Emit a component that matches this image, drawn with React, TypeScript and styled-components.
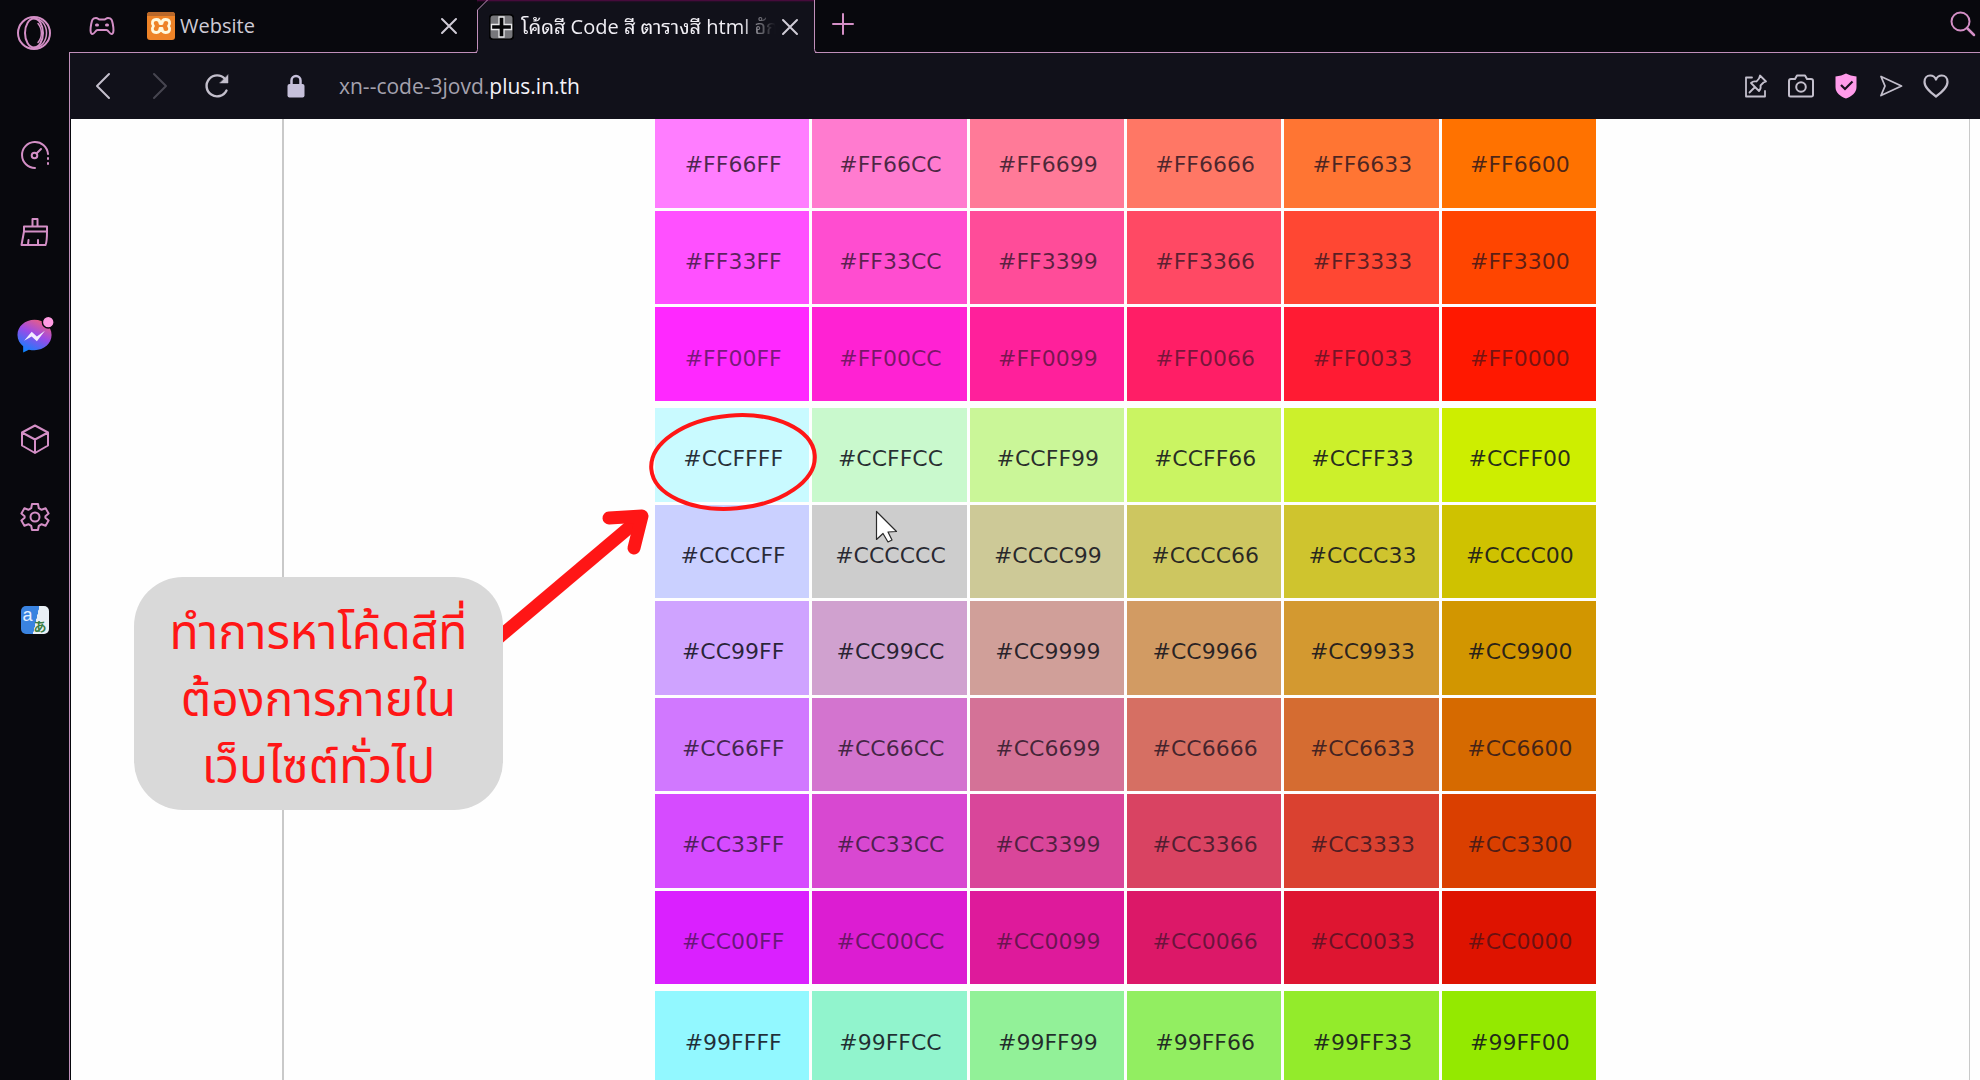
import React from "react";
import styled, { createGlobalStyle } from "styled-components";

const GlobalStyle = createGlobalStyle`
  * { box-sizing: border-box; }
  html, body, #root { height: 100%; }
  body { margin: 0; overflow: hidden; background: #08080d; }
`;

const UI_FONT = `"Open Sans", "Noto Sans", "Noto Sans Thai Looped", sans-serif`;
const PINK = "#d48fc6";
const EDGE = "#c08fba";
const BAR = "#11111a";
const RED = "#ff1616";

/* ---------- colour data ---------- */

type Swatch = [code: string, fill: string];

const GROUPS: { scrolled?: boolean; height: number; rows: Swatch[][] }[] = [
  {
    scrolled: true,
    height: 293,
    rows: [
      [["#FF66FF", "#ff7dff"], ["#FF66CC", "#ff7bcf"], ["#FF6699", "#ff7a98"], ["#FF6666", "#ff7765"], ["#FF6633", "#ff7533"], ["#FF6600", "#ff7200"]],
      [["#FF33FF", "#ff50ff"], ["#FF33CC", "#ff4dd0"], ["#FF3399", "#ff4c99"], ["#FF3366", "#ff4964"], ["#FF3333", "#ff4733"], ["#FF3300", "#ff4500"]],
      [["#FF00FF", "#ff28ff"], ["#FF00CC", "#ff22d3"], ["#FF0099", "#ff209b"], ["#FF0066", "#ff1e66"], ["#FF0033", "#ff1b33"], ["#FF0000", "#ff1800"]],
    ],
  },
  {
    height: 582,
    rows: [
      [["#CCFFFF", "#c9faff"], ["#CCFFCC", "#c9f9cd"], ["#CCFF99", "#caf698"], ["#CCFF66", "#caf462"], ["#CCFF33", "#ccf02b"], ["#CCFF00", "#cdee00"]],
      [["#CCCCFF", "#cad0ff"], ["#CCCCCC", "#cdcdcd"], ["#CCCC99", "#cdc997"], ["#CCCC66", "#cdc660"], ["#CCCC33", "#cfc42e"], ["#CCCC00", "#cfc200"]],
      [["#CC99FF", "#cfa3ff"], ["#CC99CC", "#d0a1cf"], ["#CC9999", "#d09f99"], ["#CC9966", "#d29b63"], ["#CC9933", "#d39930"], ["#CC9900", "#d29600"]],
      [["#CC66FF", "#d178ff"], ["#CC66CC", "#d374cf"], ["#CC6699", "#d47297"], ["#CC6666", "#d66f63"], ["#CC6633", "#d56c31"], ["#CC6600", "#d66a00"]],
      [["#CC33FF", "#d64bff"], ["#CC33CC", "#d848d1"], ["#CC3399", "#d9469a"], ["#CC3366", "#d94362"], ["#CC3333", "#da4130"], ["#CC3300", "#da3f00"]],
      [["#CC00FF", "#da20ff"], ["#CC00CC", "#dc1dd2"], ["#CC0099", "#de1a9b"], ["#CC0066", "#dc1868"], ["#CC0033", "#de1531"], ["#CC0000", "#de1300"]],
    ],
  },
  {
    height: 100,
    rows: [
      [["#99FFFF", "#92f8ff"], ["#99FFCC", "#91f4cd"], ["#99FF99", "#92f198"], ["#99FF66", "#92ee61"], ["#99FF33", "#93eb2b"], ["#99FF00", "#94e900"]],
    ],
  },
];

const INK_BY_GREEN: Record<string, string> = {
  "00": "rgba(28, 16, 30, 0.6)",
  "33": "rgba(28, 16, 30, 0.72)",
  "66": "rgba(28, 16, 30, 0.78)",
};

const inkFor = (code: string) => INK_BY_GREEN[code.slice(3, 5)] ?? "rgba(18, 18, 28, 0.88)";

/* ---------- frame ---------- */

const Window = styled.div`
  position: relative;
  display: flex;
  height: 100vh;
  overflow: hidden;
  font-family: ${UI_FONT};
`;

const SideBar = styled.nav`
  display: flex;
  flex: 0 0 69px;
  flex-direction: column;
  align-items: center;
  padding-top: 15px;
  background: #08080d;
`;

const IconButton = styled.button<{ $size?: number; $gap?: number }>`
  display: grid;
  place-items: center;
  flex: none;
  width: ${(p) => p.$size ?? 36}px;
  height: ${(p) => p.$size ?? 36}px;
  margin: ${(p) => p.$gap ?? 0}px 0 0;
  padding: 0;
  border: 0;
  background: none;
  color: inherit;

  svg { display: block; overflow: visible; }
`;

const Main = styled.div`
  display: flex;
  flex: 1;
  flex-direction: column;
  min-width: 0;
`;

const TabStrip = styled.header`
  display: flex;
  flex: 0 0 53px;
  background: #08080d;
  color: #cfcbd6;
`;

const IdleTab = styled.div`
  display: flex;
  align-items: center;
  width: 408px;
  padding: 0 19px 0 15px;
  border-bottom: 1px solid ${EDGE};
`;

const ActiveTab = styled.div`
  position: relative;
  display: flex;
  align-items: center;
  width: 338px;
  padding: 0 16px 0 12px;
  background: linear-gradient(135deg, #08080d 7px, ${BAR} 7px);
  box-shadow: inset 0 2px 2px -1px #5a0a48;
`;

const TabOutline = styled.svg`
  position: absolute;
  inset: 0;
  overflow: visible;
  pointer-events: none;
`;

const StripEnd = styled.div`
  display: flex;
  flex: 1;
  align-items: center;
  justify-content: space-between;
  padding: 0 0 4px 10px;
  border-bottom: 1px solid ${EDGE};
  color: ${PINK};
`;

const Favicon = styled.span`
  display: flex;
  flex: none;
  margin: 0 5px 0 27px;
`;

const PageIcon = styled.span`
  display: flex;
  flex: none;
  margin-right: 7px;
`;

const TabTitle = styled.span<{ $fade?: boolean }>`
  flex: 1;
  overflow: hidden;
  color: ${(p) => (p.$fade ? "#f1eff5" : "#cfcbd6")};
  font-size: 20px;
  line-height: 32px;
  white-space: nowrap;
  ${(p) => p.$fade && "mask-image: linear-gradient(90deg, #000 84%, transparent 98%);"}
`;

const Body = styled.div`
  display: flex;
  flex: 1;
  flex-direction: column;
  min-height: 0;
  border-left: 1px solid ${EDGE};
`;

const Toolbar = styled.div`
  display: flex;
  flex: 0 0 66px;
  align-items: center;
  padding: 0 26px 0 15px;
  background: ${BAR};
  color: #c3bfcc;
`;

const NavButtons = styled.div`
  display: flex;
  gap: 21px;
`;

const Lock = styled.span`
  display: flex;
  margin: 0 34px 0 52px;
`;

const AddressBox = styled.div`
  flex: 1;
  min-width: 0;
  color: #a5a2ae;
  font-size: 21px;
  line-height: 32px;
  white-space: nowrap;

  strong { color: #f4f2f8; font-weight: 400; }
`;

const Actions = styled.div`
  display: flex;
  gap: 9px;
`;

const Viewport = styled.main`
  flex: 1;
  min-height: 0;
  overflow: hidden;
  margin-left: 1px;
  padding: 0 10px 0 211px;
  background: #fefefe;
`;

const Article = styled.article`
  display: flex;
  flex-direction: column;
  align-items: center;
  gap: 1px;
  height: 100%;
  padding-right: 2px;
  border: solid #c9c9c9;
  border-width: 0 1px 0 2px;
`;

/* ---------- colour table ---------- */

const ColourTable = styled.table<{ $height: number; $scrolled?: boolean }>`
  flex: none;
  width: 947px;
  height: ${(p) => p.$height}px;
  margin-top: ${(p) => (p.$scrolled ? -8 : 0)}px;
  border-collapse: separate;
  border-spacing: 3px;
  table-layout: fixed;
`;

const ColourCell = styled.td<{ $fill: string; $ink: string }>`
  padding: 9px 0 0 2px;
  background: ${(p) => p.$fill};
  color: ${(p) => p.$ink};
  font-family: "DejaVu Sans", sans-serif;
  font-size: 22px;
  line-height: 28px;
  text-align: center;
`;

/* ---------- annotations ---------- */

const Marks = styled.svg`
  position: absolute;
  top: 0;
  left: 0;
  pointer-events: none;
`;

const Callout = styled.p`
  position: absolute;
  top: 577px;
  left: 134px;
  width: 369px;
  margin: 0;
  padding: 24px 16px 8px;
  border-radius: 49px;
  background: #d9d9d9;
  color: ${RED};
  font-family: "Noto Sans Thai", sans-serif;
  font-size: 48px;
  line-height: 67px;
  text-align: center;
  white-space: pre-line;
`;

/* ---------- icons ---------- */

const stroke = (width = 2) => ({
  fill: "none",
  stroke: "currentColor",
  strokeWidth: width,
  strokeLinecap: "round" as const,
  strokeLinejoin: "round" as const,
});

const SideIcons = styled.div`
  display: contents;
  color: ${PINK};
`;

const OperaIcon = () => (
  <svg width="36" height="36" viewBox="0 0 36 36" {...stroke(2)}>
    <circle cx="17" cy="18" r="16" />
    <ellipse cx="17" cy="18" rx="9" ry="14.500" />
    <path d="M17 3.500c7 0 12.500 6 12.500 14.500S24 32.500 17 32.500M21 8.500c4.500 5 4.500 14 0 19" strokeWidth="1.500" />
  </svg>
);

const SpeedIcon = () => (
  <svg width="30" height="30" viewBox="0 0 30 30" {...stroke(2)}>
    <path d="M15 28A13 13 0 1 1 28 14" />
    <path d="M28 18v1M28 23v1" />
    <circle cx="14.500" cy="15.500" r="2.800" />
    <path d="M16.500 13.500 21 9" />
  </svg>
);

const BroomIcon = () => (
  <svg width="30" height="30" viewBox="0 0 30 30" {...stroke(2)}>
    <path d="M12.500 8.500V1h5v7.500M4 8.500h23v5H4zM4 13.500 1.500 27h24c1.500-3 1.500-8 1.500-13.500M8.500 22 8 27M18 22v5" />
  </svg>
);

const MessengerIcon = () => (
  <svg width="36" height="36" viewBox="0 0 38 38">
    <defs>
      <linearGradient id="msg" x1="0.750" y1="0" x2="0.250" y2="1">
        <stop offset="0" stopColor="#f0607c" />
        <stop offset="0.450" stopColor="#9a4be8" />
        <stop offset="1" stopColor="#0a84ff" />
      </linearGradient>
    </defs>
    <path fill="url(#msg)" d="M18.500 3C8.500 3 .5 10 .5 19c0 5 2.500 9 6 12v6.500l6-3c2 .5 4 .5 6 .5 10 0 18-7 18-16S28.500 3 18.500 3Z" />
    <path fill="#f3edff" d="m7.500 25 8-9.500 5.500 5 8.500-6-8.500 11-5.500-5Z" />
    <circle cx="33" cy="5.500" r="6.200" fill="#ff9be2" stroke="#08080d" strokeWidth="1.500" />
  </svg>
);

const CubeIcon = () => (
  <svg width="30" height="30" viewBox="0 0 30 30" {...stroke(2)}>
    <path d="m15 1.500 13 7v13L15 29 2 21.500v-13ZM2 8.500l13 7 13-7M15 15.500V29" />
  </svg>
);

const GearIcon = () => (
  <svg width="30" height="30" viewBox="0 0 30 30" {...stroke(2)}>
    <path d="M12 2h6l.8 4.200 2.800 1.600 4-1.500 3 5.200-3.200 2.700v1.600l3.200 2.700-3 5.200-4-1.500-2.800 1.600L18 28h-6l-.8-4.200-2.800-1.600-4 1.500-3-5.200 3.200-2.700v-1.600l-3.200-2.700 3-5.200 4 1.500 2.800-1.600Z" />
    <circle cx="15" cy="15" r="4.500" />
  </svg>
);

const TranslateBox = styled.span`
  display: flex;
  width: 28px;
  height: 28px;
  border-radius: 5px;
  background: linear-gradient(103deg, #3a83e0 53%, #e9eff5 54%);
  font-size: 18px;
  line-height: 18px;
`;

const LatinLetter = styled.span`
  padding-left: 2px;
  color: #e6f1ff;
`;

const KanaLetter = styled.span`
  align-self: flex-end;
  padding-left: 1px;
  color: #3a7d44;
  font-family: "Noto Sans CJK JP", sans-serif;
  font-size: 13px;
  font-weight: 700;
  line-height: 16px;
`;

const GamepadIcon = () => (
  <svg width="26" height="20" viewBox="0 0 26 20" {...stroke(2)}>
    <path d="M7 2C3.500 2 3 4 2.200 8 1.400 12 .8 18 3.500 18c2 0 3-4 5-4h9c2 0 3 4 5 4 2.700 0 2.100-6 1.300-10C23 4 22.500 2 19 2c-2 0-2 1.500-3.500 1.500h-5C9 3.500 9 2 7 2Z" />
    <path d="M7.500 9h1M17.500 9h1" strokeWidth="3" />
  </svg>
);

const XamppIcon = () => (
  <svg width="28" height="28" viewBox="0 0 28 28">
    <rect width="28" height="28" rx="3" fill="#ee8327" />
    <path d="M0 3a3 3 0 0 1 3-3h22a3 3 0 0 1 3 3v1H0z" fill="#b9682a" />
    <path d="M9.500 7.500c-4.500 0-5 4-3 6.500-2 2.500-1.500 6.500 3 6.500 3 0 3.500-2 3.500-4h2c0 2 .5 4 3.500 4 4.500 0 5-4 3-6.500 2-2.500 1.500-6.500-3-6.500-3 0-3.500 2-3.500 4h-2c0-2-.5-4-3.500-4Z" fill="#ee8327" stroke="#fff8dc" strokeWidth="2.800" strokeLinejoin="round" />
  </svg>
);

const PlusBadge = () => (
  <svg width="25" height="26" viewBox="0 0 25 26">
    <rect x="0.500" y="0.500" width="24" height="25" rx="4" fill="#77777b" stroke="#030305" strokeWidth="2" />
    <path d="M10 3h5v7.500h7.500v5H15V23h-5v-7.500H2.500v-5H10z" fill="#050507" stroke="#e8e8ea" strokeWidth="1.300" />
  </svg>
);

const CloseIcon = () => (
  <svg width="16" height="16" viewBox="0 0 16 16" {...stroke(2)}>
    <path d="m1 1 14 14M15 1 1 15" />
  </svg>
);

const AddIcon = () => (
  <svg width="20" height="20" viewBox="0 0 20 20" {...stroke(2)}>
    <path d="M10 0v20M0 10h20" />
  </svg>
);

const SearchIcon = () => (
  <svg width="26" height="26" viewBox="0 0 26 26" {...stroke(2)}>
    <circle cx="11.500" cy="10.500" r="9" />
    <path d="m18 17 7 7" strokeWidth="2.500" />
  </svg>
);

const BackIcon = () => (
  <svg width="14" height="26" viewBox="0 0 14 26" {...stroke(2)}>
    <path d="M13 1 1 13l12 12" />
  </svg>
);

const ForwardIcon = () => (
  <svg width="14" height="26" viewBox="0 0 14 26" {...stroke(2)} opacity="0.300">
    <path d="m1 1 12 12L1 25" />
  </svg>
);

const ReloadIcon = () => (
  <svg width="24" height="24" viewBox="0 0 24 24" {...stroke(2.4)}>
    <path d="M21.500 16.500A10.500 10.500 0 1 1 20 5" />
    <path d="M23 1v8h-8Z" fill="currentColor" strokeWidth="0.500" />
  </svg>
);

const LockIcon = () => (
  <svg width="18" height="24" viewBox="0 0 18 24">
    <path d="M4.500 12V6.500a4.500 4.500 0 0 1 9 0V12" fill="none" stroke="#c6c0da" strokeWidth="2.500" />
    <rect x="0.500" y="10" width="17" height="13.500" rx="2" fill="#c6c0da" />
  </svg>
);

const PinIcon = () => (
  <svg width="24" height="24" viewBox="0 0 24 24" {...stroke(1.8)}>
    <path d="M8 3.500H2v19h19V17" />
    <path d="m16 1.500 6 6-2.500 1-3 3c.5 2 0 4-1.500 5.500L7 9c1.500-1.500 3.500-2 5.500-1.500l2.500-3ZM11 13l-5.500 5.500" />
  </svg>
);

const CameraIcon = () => (
  <svg width="26" height="24" viewBox="0 0 26 24" {...stroke(2)}>
    <path d="M3 5h4l2-3.500h8L19 5h4a2 2 0 0 1 2 2v14a1.500 1.500 0 0 1-1.500 1.500h-21A1.500 1.500 0 0 1 1 21V7a2 2 0 0 1 2-2Z" />
    <circle cx="13" cy="13" r="4.800" />
  </svg>
);

const ShieldIcon = () => (
  <svg width="22" height="26" viewBox="0 0 22 26">
    <path d="M11 .5c3 1.500 6.500 2.500 10.500 3v10.500c0 6-5 9.500-10.500 11.500C5.500 23.500.5 20 .5 14V3.500C4.500 3 8 2 11 .5Z" fill="#ff9bea" />
    <path d="m6 12 4 4 7.500-7.500" fill="none" stroke="#1b1020" strokeWidth="2.200" />
  </svg>
);

const SendIcon = () => (
  <svg width="24" height="22" viewBox="0 0 24 22" {...stroke(1.8)}>
    <path d="m2 1.500 20.500 9.500L2 20.500 6 11Z" />
  </svg>
);

const HeartIcon = () => (
  <svg width="26" height="24" viewBox="0 0 26 24" {...stroke(2.2)}>
    <path d="M13 22.500C7 18 1.500 13.500 1.500 8c0-4 2.500-6.500 5.700-6.500C9.800 1.500 12 3 13 5.500c1-2.500 3.200-4 5.800-4 3.200 0 5.700 2.500 5.700 6.500 0 5.500-5.500 10-11.500 14.500Z" />
  </svg>
);

/* ---------- page ---------- */

export default function App() {
  return (
    <Window>
      <GlobalStyle />
      <SideBar aria-label="Sidebar">
        <SideIcons>
          <IconButton aria-label="Opera menu"><OperaIcon /></IconButton>
          <IconButton aria-label="Speed" $gap={86}><SpeedIcon /></IconButton>
          <IconButton aria-label="Cleaner" $gap={42}><BroomIcon /></IconButton>
          <IconButton aria-label="Messenger" $gap={66}><MessengerIcon /></IconButton>
          <IconButton aria-label="Extensions" $gap={68}><CubeIcon /></IconButton>
          <IconButton aria-label="Settings" $gap={42}><GearIcon /></IconButton>
          <IconButton aria-label="Translate" $gap={67}>
            <TranslateBox>
              <LatinLetter>a</LatinLetter>
              <KanaLetter>あ</KanaLetter>
            </TranslateBox>
          </IconButton>
        </SideIcons>
      </SideBar>

      <Main>
        <TabStrip>
          <IdleTab>
            <SideIcons>
              <IconButton aria-label="GX corner"><GamepadIcon /></IconButton>
            </SideIcons>
            <Favicon><XamppIcon /></Favicon>
            <TabTitle>Website</TabTitle>
            <IconButton aria-label="Close Website" $size={18}><CloseIcon /></IconButton>
          </IdleTab>
          <ActiveTab>
            <TabOutline width="338" height="53" fill="none" stroke={EDGE} strokeWidth="1">
              <path d="M-2 52.500Q.5 52.500.5 49.500V10L10.500 0M337.500 0V49.500Q337.500 52.500 340 52.500" />
            </TabOutline>
            <PageIcon><PlusBadge /></PageIcon>
            <TabTitle $fade>โค้ดสี Code สี ตารางสี html อัก</TabTitle>
            <IconButton aria-label="Close tab" $size={18}><CloseIcon /></IconButton>
          </ActiveTab>
          <StripEnd>
            <IconButton aria-label="New tab"><AddIcon /></IconButton>
            <IconButton aria-label="Search tabs"><SearchIcon /></IconButton>
          </StripEnd>
        </TabStrip>

        <Body>
          <Toolbar>
            <NavButtons>
              <IconButton aria-label="Back"><BackIcon /></IconButton>
              <IconButton aria-label="Forward"><ForwardIcon /></IconButton>
              <IconButton aria-label="Reload"><ReloadIcon /></IconButton>
            </NavButtons>
            <Lock><LockIcon /></Lock>
            <AddressBox>xn--code-3jovd.<strong>plus.in.th</strong></AddressBox>
            <Actions>
              <IconButton aria-label="Pin page"><PinIcon /></IconButton>
              <IconButton aria-label="Snapshot"><CameraIcon /></IconButton>
              <IconButton aria-label="Tracker blocker"><ShieldIcon /></IconButton>
              <IconButton aria-label="Send"><SendIcon /></IconButton>
              <IconButton aria-label="Bookmark"><HeartIcon /></IconButton>
            </Actions>
          </Toolbar>

          <Viewport>
            <Article>
              {GROUPS.map((group) => (
                <ColourTable key={group.rows[0][0][0]} $height={group.height} $scrolled={group.scrolled}>
                  <tbody>
                    {group.rows.map((row) => (
                      <tr key={row[0][0]}>
                        {row.map(([code, fill]) => (
                          <ColourCell key={code} $fill={fill} $ink={inkFor(code)}>{code}</ColourCell>
                        ))}
                      </tr>
                    ))}
                  </tbody>
                </ColourTable>
              ))}
            </Article>
          </Viewport>
        </Body>
      </Main>

      <Marks width="1000" height="700" viewBox="0 0 1000 700" fill="none">
        <ellipse cx="733" cy="462" rx="82" ry="46.500" transform="rotate(-5 733 462)" stroke={RED} strokeWidth="4" />
        <path d="M490 645 638 520" stroke={RED} strokeWidth="13" />
        <path d="M609 518 642 516 634 548" stroke={RED} strokeWidth="13" strokeLinecap="round" strokeLinejoin="round" />
        <path d="M876.500 511.500v28l6.500-6 5 8.500 4-2-4-8 8.500-.5Z" fill="#fff" stroke="#2a2a2a" strokeWidth="1.200" strokeLinejoin="round" />
      </Marks>
      <Callout>{"ทำการหาโค้ดสีที่\nต้องการภายใน\nเว็บไซต์ทั่วไป"}</Callout>
    </Window>
  );
}
